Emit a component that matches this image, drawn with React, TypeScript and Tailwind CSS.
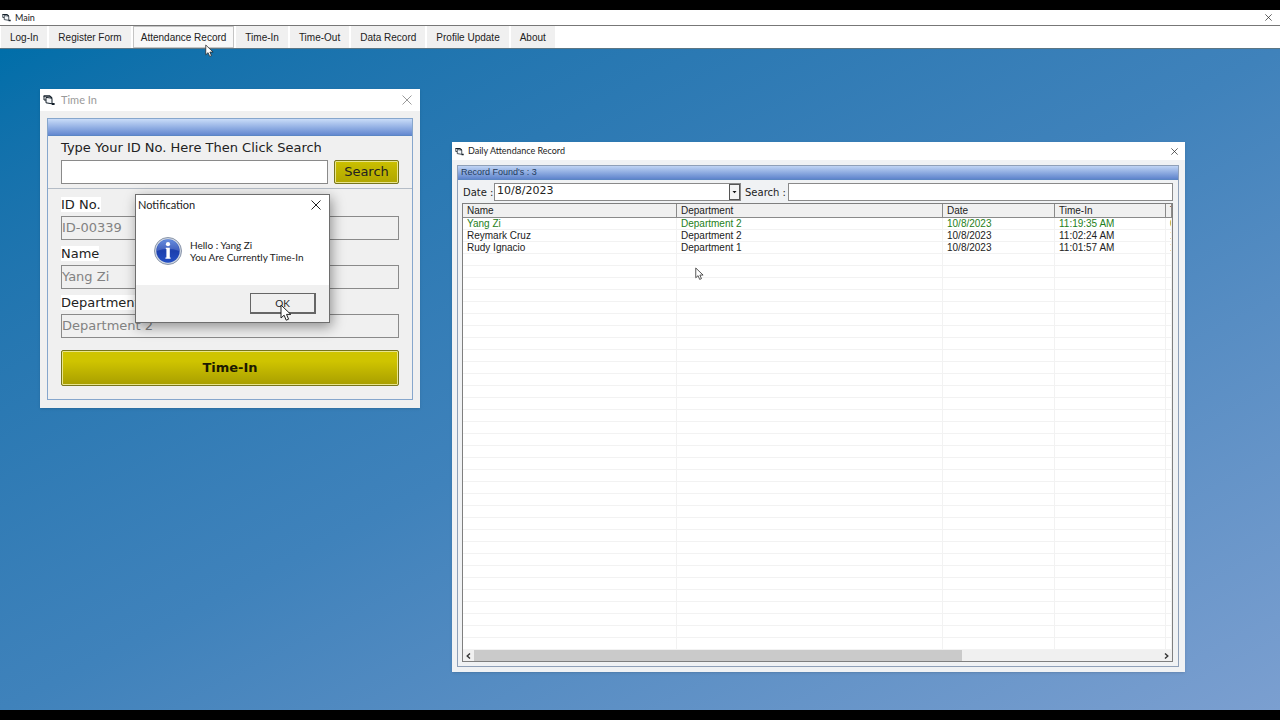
import React from 'react';

interface AttendanceRow {
  name: string;
  department: string;
  date: string;
  timeIn: string;
  timeOut: string;
  active?: boolean;
}

const menuItems = ['Log-In', 'Register Form', 'Attendance Record', 'Time-In', 'Time-Out', 'Data Record', 'Profile Update', 'About'];

const rows: AttendanceRow[] = [
  { name: 'Yang Zi', department: 'Department 2', date: '10/8/2023', timeIn: '11:19:35 AM', timeOut: '0', active: true },
  { name: 'Reymark Cruz', department: 'Department 2', date: '10/8/2023', timeIn: '11:02:24 AM', timeOut: '1' },
  { name: 'Rudy Ignacio', department: 'Department 1', date: '10/8/2023', timeIn: '11:01:57 AM', timeOut: '1' },
];

// The grid keeps drawing its lines below the last record
const EMPTY_ROWS = 33;

const FormIcon = ({ className }: { className: string }) => (
  <svg viewBox="0 0 12 12" className={className} fill="none" stroke="#14202b">
    <path d="M1 2 V6 H3" strokeWidth="1" />
    <path d="M3 3.4 L9 4.2 V9.8 L3 8.8 Z" fill="#f4f7fa" strokeWidth="1" />
    <path d="M0.6 2 H6.6 L9 4" strokeWidth="1.4" />
    <rect x="8.8" y="9" width="2.8" height="2" fill="#14202b" stroke="none" />
  </svg>
);

const CloseIcon = ({ className }: { className: string }) => (
  <svg viewBox="0 0 10 10" className={className} fill="none" stroke="currentColor" strokeWidth="1">
    <path d="M0.5 0.5 L9.5 9.5 M9.5 0.5 L0.5 9.5" />
  </svg>
);

const Pointer = ({ className }: { className: string }) => (
  <svg viewBox="0 0 12 18" className={className}>
    <path d="M1 1 V14 L4.1 11.2 L6.2 16.2 L8.6 15.2 L6.5 10.4 H10.8 Z" fill="#fff" stroke="#222" strokeWidth="1" />
  </svg>
);

const InfoIcon = () => (
  <svg viewBox="0 0 28 28" className="size-7 shrink-0">
    <defs>
      <linearGradient id="info" x1="0" y1="0" x2="0" y2="1">
        <stop offset="0" stopColor="#4a78d8" />
        <stop offset="0.5" stopColor="#1c3fae" />
        <stop offset="1" stopColor="#2450c4" />
      </linearGradient>
    </defs>
    <circle cx="14" cy="14" r="13.5" fill="#cdd5e2" stroke="#8a96aa" strokeWidth="1" />
    <circle cx="14" cy="14" r="11.7" fill="url(#info)" />
    <path d="M2.8 14 A11.2 11.2 0 0 1 25.2 14 Q14 9.5 2.8 14 Z" fill="#fff" opacity="0.16" />
    <circle cx="14" cy="7.2" r="2.1" fill="#fff" />
    <path d="M11.8 10.8 H15.8 V20.6 H16.6 V21.8 H11.4 V20.6 H12.4 V12 H11.8 Z" fill="#fff" />
  </svg>
);

const Field = ({ id, label, value }: { id: string; label: string; value: string }) => (
  <div className="flex flex-col items-start">
    <label htmlFor={id} className="h-[15px] bg-white text-[13px] leading-[15px]">{label}</label>
    <input id={id} defaultValue={value} disabled className="mt-1 h-6 w-full border border-[#8a8a8a] bg-[#f0f0f0] pb-0.5 text-[13px] text-[#828282]" />
  </div>
);

const TimeInWindow = () => (
  <section className="absolute left-10 top-10 w-[380px] bg-[#f0f0f0] pb-2 font-['DejaVu_Sans',sans-serif] text-[#222] shadow-sm">
    <header className="flex h-[22px] items-center bg-white pl-[3px] pr-2 font-['Lato',sans-serif] text-[11px] text-[#9a9a9a]">
      <FormIcon className="size-3" />
      <h2 className="ml-1.5 flex-1">Time In</h2>
      <button aria-label="Close Time In"><CloseIcon className="size-2.5" /></button>
    </header>
    <div className="mx-[7px] mt-[7px] border border-[#86a6cc]">
      <div className="h-[17px] border-b border-[#5b86c4] bg-linear-to-b from-[#c9dcf8] to-[#6488d0]"></div>
      <div className="border-b border-[#b4bcc6] px-[13px] pb-1 pt-1">
        <label htmlFor="id-search" className="block text-[13px] leading-4">Type Your ID No. Here Then Click Search</label>
        <div className="mt-1 flex gap-1.5">
          <input id="id-search" className="h-6 min-w-0 flex-1 border border-[#8a8a8a] bg-white px-1 text-[13px]" />
          <button className="h-6 w-[65px] rounded-xs border border-[#77751c] bg-linear-to-b from-[#cbc000] to-[#b0a600] text-[13px] leading-4 inset-ring inset-ring-[#e8e48c]">Search</button>
        </div>
      </div>
      <div className="px-[13px] pb-[13px] pt-2">
        <div className="flex flex-col gap-1.5">
          <Field id="id-no" label="ID No." value="ID-00339" />
          <Field id="name" label="Name" value="Yang Zi" />
          <Field id="department" label="Department" value="Department 2" />
        </div>
        <button className="mt-3 h-9 w-full rounded-xs border border-[#77751c] bg-linear-to-b from-[#cfc400] from-30% to-[#a89e00] text-[13px] font-bold text-[#1c1a00] inset-ring inset-ring-[#e8e48c]">Time-In</button>
      </div>
    </div>
  </section>
);

const Notification = () => (
  <div role="dialog" aria-labelledby="notification-title" className="absolute left-[135px] top-[145px] w-[195px] border border-[#6e6e6e] bg-white font-['Lato',sans-serif] text-[#222] shadow-[2px_4px_12px_rgba(0,0,0,0.4)]">
    <header className="flex h-5 items-center pl-0.5 pr-2 text-[11px]">
      <h2 id="notification-title" className="flex-1">Notification</h2>
      <button aria-label="Close notification"><CloseIcon className="size-2.5" /></button>
    </header>
    <div className="flex items-center gap-2 px-[18px] pb-5 pt-[22px]">
      <InfoIcon />
      <p className="whitespace-nowrap text-[10px] leading-3">Hello : Yang Zi<br />You Are Currently Time-In</p>
    </div>
    <footer className="flex justify-end bg-[#f0f0f0] px-[13px] pb-2 pt-2">
      <button className="h-[21px] w-[66px] border border-b-2 border-r-2 border-[#666] bg-[#f0f0f0] text-[10px] leading-4">OK</button>
    </footer>
  </div>
);

const cell = 'h-3 overflow-hidden whitespace-nowrap border-b border-r border-[#f2f2f2] p-0 pl-1 text-[10px] leading-[11px]';
const headCell = 'h-[14px] overflow-hidden whitespace-nowrap border-b border-r border-[#8a8a8a] bg-[#f0f0f0] p-0 pl-1 text-left text-[10px] font-normal leading-[13px]';

const AttendanceWindow = () => (
  <section className="absolute left-[452px] top-[93px] w-[733px] bg-[#f0f2f4] pb-[5px] text-[#222] shadow-sm">
    <header className="flex h-[18px] items-center bg-white pl-[3px] pr-[7px] font-['Lato',sans-serif] text-[9px]">
      <FormIcon className="size-[9px]" />
      <h2 className="ml-1 flex-1">Daily Attendance Record</h2>
      <button aria-label="Close Daily Attendance Record"><CloseIcon className="size-[7px]" /></button>
    </header>
    <div className="ml-[5px] mr-1.5 mt-[5px] border border-[#8fa0b8]">
      <h3 className="h-[14px] border-b border-[#5b86c4] bg-linear-to-b from-[#c0d4f4] to-[#5f84cc] pl-[3px] text-[9px] leading-[13px] text-[#223a5c]">Record Found's : 3</h3>
      <div className="flex items-center gap-1 px-[5px] pb-0.5 pt-[3px] font-['DejaVu_Sans',sans-serif] text-[11px]">
        <label htmlFor="date" className="w-[27px] shrink-0 whitespace-nowrap text-[10px]">Date :</label>
        <div className="relative w-[247px] shrink-0">
          <select id="date" className="block h-[18px] w-full appearance-none border border-[#8a8a8a] bg-white pb-0.5 pl-0.5 text-[11px] leading-3">
            <option>10/8/2023</option>
          </select>
          <svg viewBox="0 0 11 16" className="pointer-events-none absolute right-px top-px h-4 w-[11px]">
            <rect x="0.5" y="0.5" width="10" height="15" fill="#f4f4f4" stroke="#555" />
            <path d="M3.5 7 H7.5 L5.5 9.2 Z" fill="#111" />
          </svg>
        </div>
        <label htmlFor="search" className="w-[39px] shrink-0 whitespace-nowrap text-[10px]">Search :</label>
        <input id="search" className="h-[18px] min-w-0 flex-1 border border-[#8a8a8a] bg-white px-1 text-[11px]" />
      </div>
      <div className="mb-1 ml-1 mr-[5px] overflow-hidden border border-[#7f7f7f] bg-white">
        <table className="w-full table-fixed border-separate border-spacing-0">
          <colgroup>
            <col className="w-[214px]" />
            <col className="w-[266px]" />
            <col className="w-[112px]" />
            <col className="w-[111px]" />
            <col />
          </colgroup>
          <thead>
            <tr>
              <th className={headCell}>Name</th>
              <th className={headCell}>Department</th>
              <th className={headCell}>Date</th>
              <th className={headCell}>Time-In</th>
              <th className={headCell}>Time-Out</th>
            </tr>
          </thead>
          <tbody>
            {rows.map((row) => (
              <tr key={row.name} className={row.active ? 'text-[#1e8020]' : ''}>
                <td className={cell}>{row.name}</td>
                <td className={cell}>{row.department}</td>
                <td className={cell}>{row.date}</td>
                <td className={cell}>{row.timeIn}</td>
                <td className={cell}>{row.timeOut}</td>
              </tr>
            ))}
            {Array.from({ length: EMPTY_ROWS }, (_, i) => (
              <tr key={i}>
                <td className={cell}></td>
                <td className={cell}></td>
                <td className={cell}></td>
                <td className={cell}></td>
                <td className={cell}></td>
              </tr>
            ))}
          </tbody>
        </table>
        <div className="flex h-[11px] items-center bg-[#f0f0f0]">
          <button aria-label="Scroll left" className="flex w-[11px] justify-center">
            <svg viewBox="0 0 5 6" className="h-1.5 w-[5px]" fill="none" stroke="#333" strokeWidth="1.4"><path d="M4 0.5 L1.2 3 L4 5.5" /></svg>
          </button>
          <div className="h-full flex-1"><div className="h-full w-[71%] bg-[#cacaca]"></div></div>
          <button aria-label="Scroll right" className="flex w-[11px] justify-center">
            <svg viewBox="0 0 5 6" className="h-1.5 w-[5px]" fill="none" stroke="#333" strokeWidth="1.4"><path d="M1 0.5 L3.8 3 L1 5.5" /></svg>
          </button>
        </div>
      </div>
    </div>
  </section>
);

export default function App() {
  return (
    <div className="flex min-h-screen flex-col bg-black py-2.5 font-['Liberation_Sans',sans-serif] text-[#222]">
      <header className="flex h-4 items-center border-b border-[#777] bg-white pl-0.5 pr-2 font-['Lato',sans-serif] text-[9px]">
        <FormIcon className="size-[9px]" />
        <h1 className="ml-1 flex-1">Main</h1>
        <button aria-label="Close Main"><CloseIcon className="size-[7px]" /></button>
      </header>
      <nav className="flex h-[23px] items-stretch gap-0.5 border-b border-[#5c7684] bg-white pl-px text-[10px]">
        {menuItems.map((item) => (
          <button
            key={item}
            className={item === 'Attendance Record' ? 'border border-[#c4c4c4] bg-[#f8f8f8] px-[7px]' : 'bg-[#f0f0f0] px-[9px]'}
          >
            {item}
          </button>
        ))}
      </nav>
      <main className="relative min-h-[661px] flex-1 overflow-hidden bg-linear-to-br from-[#006ea9] via-[#3f82bb] to-[#7b9fd0]">
        <TimeInWindow />
        <AttendanceWindow />
        <Notification />
        <Pointer className="absolute left-[280px] top-[255px] h-[18px] w-3" />
        <Pointer className="absolute left-[695px] top-[218px] h-[14px] w-[9px]" />
      </main>
      <Pointer className="absolute left-[205px] top-[44px] h-[14px] w-[9px]" />
    </div>
  );
}
